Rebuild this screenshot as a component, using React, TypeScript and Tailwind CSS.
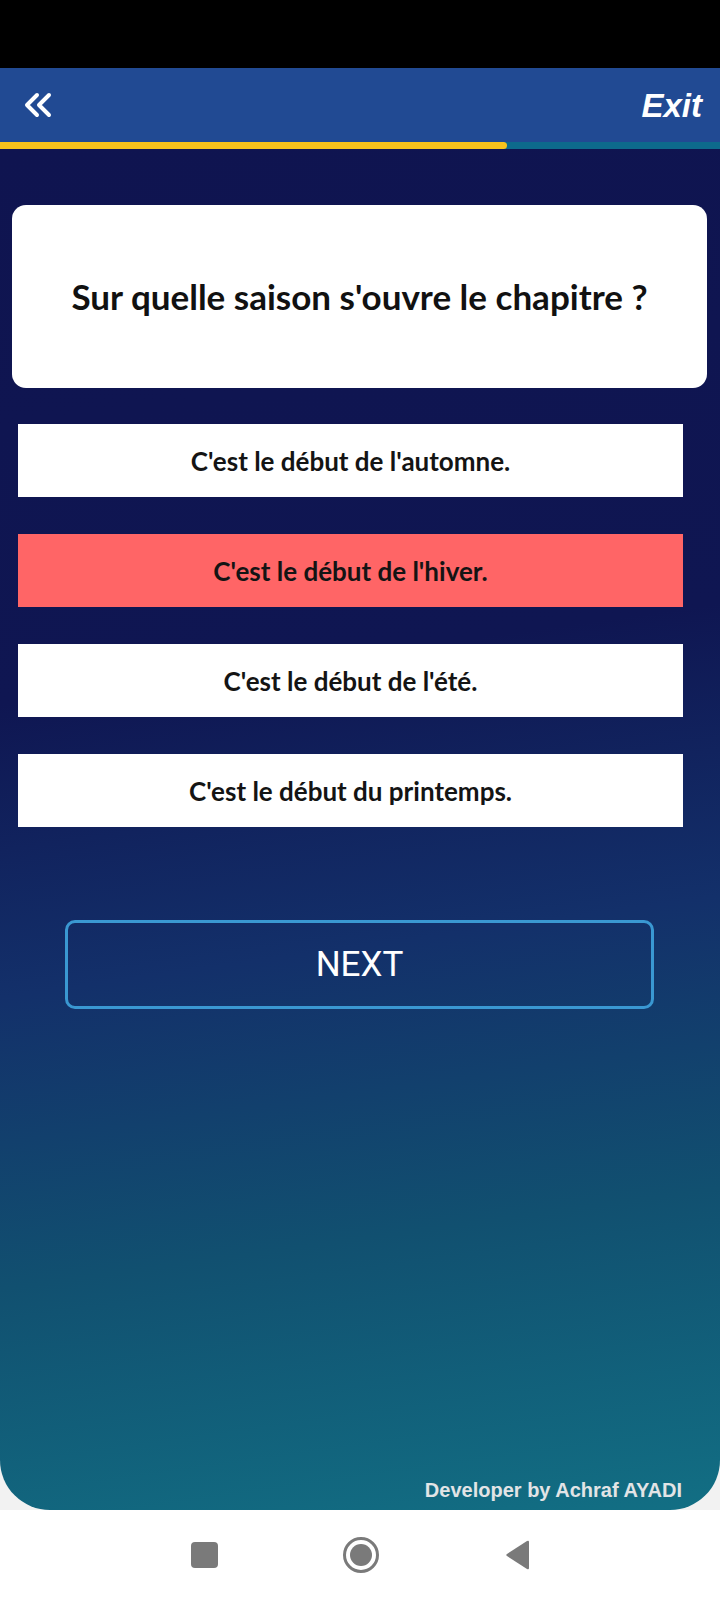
import React from "react";

const options = [
  { text: "C'est le début de l'automne.", wrong: false },
  { text: "C'est le début de l'hiver.", wrong: true },
  { text: "C'est le début de l'été.", wrong: false },
  { text: "C'est le début du printemps.", wrong: false },
];

export default function App() {
  return (
    <div className="w-[720px] h-[1600px] flex flex-col bg-[#f2f2f2] overflow-hidden">
      <div className="h-[68px] bg-black shrink-0" />
      <div className="h-[74px] bg-[#214a93] shrink-0 flex items-center justify-between pl-[23px] pr-[18px]">
        <svg width="30" height="26" viewBox="0 0 30 26" fill="none" stroke="white" strokeWidth="4" strokeLinecap="round" strokeLinejoin="round">
          <path d="M14 3 L4 13 L14 23" />
          <path d="M26 3 L16 13 L26 23" />
        </svg>
        <span className="text-white italic font-bold text-[33px] leading-none" style={{ fontFamily: '"Liberation Sans", Arial, sans-serif' }}>
          Exit
        </span>
      </div>
      <div className="h-[7px] bg-[#0d6a8c] shrink-0 flex">
        <div className="w-[507px] h-full bg-[#f7c21c] rounded-r-full" />
      </div>
      <div
        className="flex-1 rounded-b-[50px] bg-[linear-gradient(172deg,#0f1450_0%,#0f1652_38%,#13306a_58%,#115070_78%,#126f84_100%)] flex flex-col items-start"
        style={{ fontFamily: 'Lato, "Noto Sans", sans-serif' }}
      >
        <div className="mt-[56px] ml-[12px] w-[695px] h-[183px] bg-white rounded-[14px] flex items-center justify-center">
          <span className="text-[35px] font-bold text-[#111] leading-none">Sur quelle saison s'ouvre le chapitre ?</span>
        </div>
        <div className="mt-[36px] ml-[18px] flex flex-col gap-[37px]">
          {options.map((o) => (
            <div
              key={o.text}
              className={
                "w-[665px] h-[73px] flex items-center justify-center " +
                (o.wrong ? "bg-[#ff6566]" : "bg-white")
              }
            >
              <span className="text-[26px] font-bold text-[#141414] leading-none">{o.text}</span>
            </div>
          ))}
        </div>
        <div className="mt-[93px] ml-[65px] w-[589px] h-[89px] border-[3px] border-[#3a98d2] rounded-[10px] flex items-center justify-center">
          <span className="text-white text-[35px] leading-none" style={{ fontFamily: 'Roboto, sans-serif' }}>
            NEXT
          </span>
        </div>
        <div className="mt-auto mb-[5px] self-end mr-[38px]">
          <span className="text-[#e2e4e6] font-bold text-[20px]" style={{ fontFamily: '"Liberation Sans", Arial, sans-serif' }}>
            Developer by Achraf AYADI
          </span>
        </div>
      </div>
      <div className="h-[90px] bg-white shrink-0 flex items-center justify-center">
        <div className="flex items-center">
          <div className="w-[27px] h-[26px] rounded-[4px] bg-[#7a7a7a]" />
          <div className="ml-[125px] w-[36px] h-[36px] rounded-full border-[3px] border-[#7a7a7a] flex items-center justify-center">
            <div className="w-[22px] h-[22px] rounded-full bg-[#7a7a7a]" />
          </div>
          <svg className="ml-[126px]" width="25" height="30" viewBox="0 0 25 30">
            <path d="M24 2 L24 28 Q24 30 22 29 L2 16 Q0.5 15 2 14 L22 1 Q24 0 24 2 Z" fill="#7a7a7a" />
          </svg>
        </div>
      </div>
    </div>
  );
}
